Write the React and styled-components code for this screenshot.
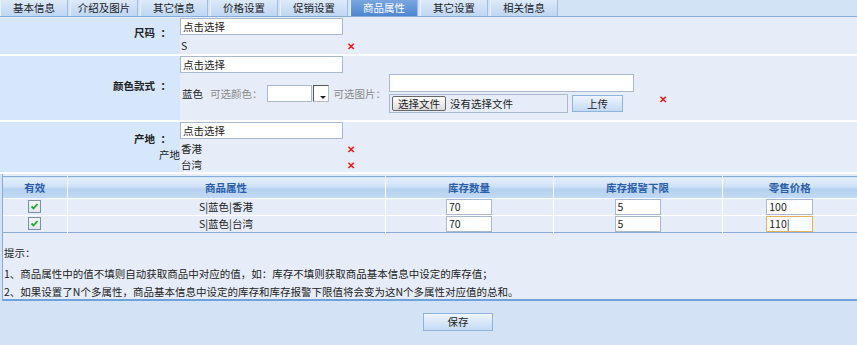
import React from "react";
import styled, { createGlobalStyle } from "styled-components";

const Global = createGlobalStyle`
  body {
    margin: 0;
    background: #d3e2f5;
    font-family: "Noto Sans CJK SC", "Liberation Sans", sans-serif;
    font-size: 10.5px;
    color: #222;
  }
  * { box-sizing: border-box; }
`;

const tabs = ["基本信息", "介绍及图片", "其它信息", "价格设置", "促销设置", "商品属性", "其它设置", "相关信息"];

const TabBar = styled.div`
  display: flex;
  gap: 2px;
  height: 17px;
  background: #d2e3f6;
  border-bottom: 1px solid #86acd9;
`;

const Tab = styled.div`
  width: 68px;
  height: 16px;
  line-height: 15px;
  text-align: center;
  color: ${(p) => (p.$active ? "#fff" : "#222")};
  background: ${(p) =>
    p.$active
      ? "linear-gradient(#7aa6e0, #4d86cf)"
      : "linear-gradient(#dce9f9, #bfd6f2)"};
  border-right: 1px solid #9dbde3;
  border-left: 1px solid #e8f0fb;
`;

const Form = styled.div`
  background: #e6edf8;
  padding-top: 1px;
`;

const Row = styled.div`
  display: flex;
  height: ${(p) => p.$h}px;
  border-bottom: 2px solid #fff;
`;

const Label = styled.div`
  width: 180px;
  flex: none;
  background: #d6e7fb;
  display: flex;
  flex-direction: column;
  justify-content: center;
  align-items: flex-end;
  padding-bottom: ${(p) => p.$pb || 8}px;
`;

const LabelText = styled.b`
  padding-right: 9px;
  word-spacing: 3px;
`;

const SubLabel = styled.span`
  margin-top: 1px;
`;

const Value = styled.div`
  flex: 1;
  display: flex;
  flex-direction: column;
`;

const TextInput = styled.div`
  width: ${(p) => p.$w}px;
  height: ${(p) => p.$h || 17}px;
  background: #fff;
  border: 1px solid ${(p) => (p.$focus ? "#e3b35c" : "#a9b9cf")};
  padding-left: 2px;
  line-height: 15px;
`;

const Option = styled.div`
  display: flex;
  align-items: center;
  height: 16px;
  margin-top: ${(p) => p.$mt || 0}px;
`;

const OptName = styled.span`
  width: 167px;
  padding-left: 1px;
`;

const Del = styled.span`
  color: #ee1111;
  font-size: 10px;
  font-weight: bold;
`;

const ColorLine = styled.div`
  display: flex;
  align-items: center;
  padding-left: 2px;
  margin-top: 1px;
`;

const Gray = styled.span`
  color: #8a8a8a;
  margin: 0 ${(p) => p.$mr || 4}px 0 ${(p) => p.$ml || 0}px;
`;

const Picker = styled.div`
  width: 16px;
  height: 17px;
  margin-left: 1px;
  border: 1px solid #555;
  border-right-color: #bbb;
  border-bottom-color: #bbb;
  background: #fff;
  position: relative;
  &::after {
    content: "";
    position: absolute;
    right: 2px;
    bottom: 2px;
    border: 3px solid transparent;
    border-top-color: #222;
    border-bottom: 0;
  }
`;

const Stack = styled.div`
  display: flex;
  flex-direction: column;
  gap: 2px;
`;

const FileRow = styled.div`
  display: flex;
  align-items: center;
`;

const FileBox = styled.div`
  width: 179px;
  height: 19px;
  border: 1px solid #a9b9cf;
  display: flex;
  align-items: center;
  padding-left: 2px;
  gap: 4px;
`;

const FileBtn = styled.div`
  height: 15px;
  padding: 0 5px;
  line-height: 13px;
  border: 1px solid #666;
  border-radius: 2px;
  background: linear-gradient(#fdfdfd, #dcdcdc);
`;

const BlueBtn = styled.div`
  width: ${(p) => p.$w}px;
  height: ${(p) => p.$h}px;
  line-height: ${(p) => p.$h - 2}px;
  text-align: center;
  border: 1px solid #8fb3dc;
  background: linear-gradient(#eef5fd, #c3daf4);
  margin-left: ${(p) => p.$ml || 0}px;
`;

const Lower = styled.div`
  background: #e6edf8;
  border-left: 1px solid #86acd9;
  border-bottom: 2px solid #6ea3db;
  margin-left: 2px;
  padding-top: 2px;
  height: 127px;
`;

const Table = styled.table`
  width: 100%;
  border-collapse: collapse;
  border-top: 1px solid #86acd9;
  border-bottom: 1px solid #86acd9;
  th {
    height: 22px;
    font-weight: bold;
    color: #2b5ea8;
    background: linear-gradient(#e4eefb 0%, #cfe1f6 45%, #b5d1f0 55%, #c2daf4 100%);
    border-left: 1px solid #fff;
    padding: 0;
  }
  th:first-child, td:first-child { border-left: none; }
  td {
    height: 16px;
    text-align: center;
    border-top: 1px solid #fff;
    border-left: 1px solid #fff;
    padding: 0;
    line-height: 16px;
  }
`;

const CellInput = styled(TextInput)`
  display: inline-block;
  vertical-align: top;
  text-align: left;
  height: 16px;
  line-height: 14px;
`;

const Check = styled.span`
  display: inline-flex;
  vertical-align: top;
  margin-top: 1px;
  width: 13px;
  height: 13px;
  border: 1px solid #7b8fa6;
  background: linear-gradient(#f4f6f8, #dfe6ee);
`;

const Hints = styled.div`
  padding: 11px 0 0 1px;
  p {
    margin: 0;
    height: 18px;
    line-height: 18px;
    white-space: nowrap;
  }
  p:first-child { height: 21px; }
`;

const Footer = styled.div`
  display: flex;
  padding: 12px 0 0 423px;
`;

const rows = [
  { name: "S|蓝色|香港" },
  { name: "S|蓝色|台湾", focus: true },
];

export default function App() {
  return (
    <>
      <Global />
      <TabBar>
        {tabs.map((t) => (
          <Tab key={t} $active={t === "商品属性"}>{t}</Tab>
        ))}
      </TabBar>
      <Form>
        <Row $h={38}>
          <Label><LabelText>尺码 ：</LabelText></Label>
          <Value>
            <TextInput $w={163}>点击选择</TextInput>
            <Option $mt={2}><OptName>S</OptName><Del>✕</Del></Option>
          </Value>
        </Row>
        <Row $h={66}>
          <Label $pb={6}><LabelText>颜色款式 ：</LabelText></Label>
          <Value>
            <TextInput $w={163}>点击选择</TextInput>
            <ColorLine>
              <span>蓝色</span>
              <Gray $ml={7}>可选颜色：</Gray>
              <TextInput $w={45} $h={17} />
              <Picker />
              <Gray $ml={5} $mr={3}>可选图片：</Gray>
              <Stack>
                <TextInput $w={245} $h={18} />
                <FileRow>
                  <FileBox>
                    <FileBtn>选择文件</FileBtn>
                    <span>没有选择文件</span>
                  </FileBox>
                  <BlueBtn $w={51} $h={17} $ml={4}>上传</BlueBtn>
                  <Del style={{ marginLeft: 36, marginTop: -10 }}>✕</Del>
                </FileRow>
              </Stack>
            </ColorLine>
          </Value>
        </Row>
        <Row $h={52}>
          <Label $pb={2}>
            <LabelText>产地 ：</LabelText>
            <SubLabel>产地</SubLabel>
          </Label>
          <Value>
            <TextInput $w={163}>点击选择</TextInput>
            <Option $mt={2}><OptName>香港</OptName><Del>✕</Del></Option>
            <Option><OptName>台湾</OptName><Del>✕</Del></Option>
          </Value>
        </Row>
      </Form>
      <Lower>
        <Table>
          <colgroup>
            <col style={{ width: 64 }} />
            <col style={{ width: 318 }} />
            <col style={{ width: 168 }} />
            <col style={{ width: 169 }} />
            <col />
          </colgroup>
          <thead>
            <tr>
              <th>有效</th>
              <th>商品属性</th>
              <th>库存数量</th>
              <th>库存报警下限</th>
              <th>零售价格</th>
            </tr>
          </thead>
          <tbody>
            {rows.map((r, i) => (
              <tr key={r.name}>
                <td>
                  <Check>
                    <svg width="11" height="11" viewBox="0 0 11 11">
                      <path d="M2.5 5.5 L4.5 7.5 L8.5 3" fill="none" stroke="#22a82a" strokeWidth="1.8" />
                    </svg>
                  </Check>
                </td>
                <td>{r.name}</td>
                <td><CellInput $w={46}>70</CellInput></td>
                <td><CellInput $w={46}>5</CellInput></td>
                <td><CellInput $w={47} $focus={r.focus}>{i === 0 ? "100" : "110|"}</CellInput></td>
              </tr>
            ))}
          </tbody>
        </Table>
        <Hints>
          <p>提示：</p>
          <p>1、商品属性中的值不填则自动获取商品中对应的值，如：库存不填则获取商品基本信息中设定的库存值；</p>
          <p>2、如果设置了N个多属性，商品基本信息中设定的库存和库存报警下限值将会变为这N个多属性对应值的总和。</p>
        </Hints>
      </Lower>
      <Footer>
        <BlueBtn $w={70} $h={18}>保存</BlueBtn>
      </Footer>
    </>
  );
}
